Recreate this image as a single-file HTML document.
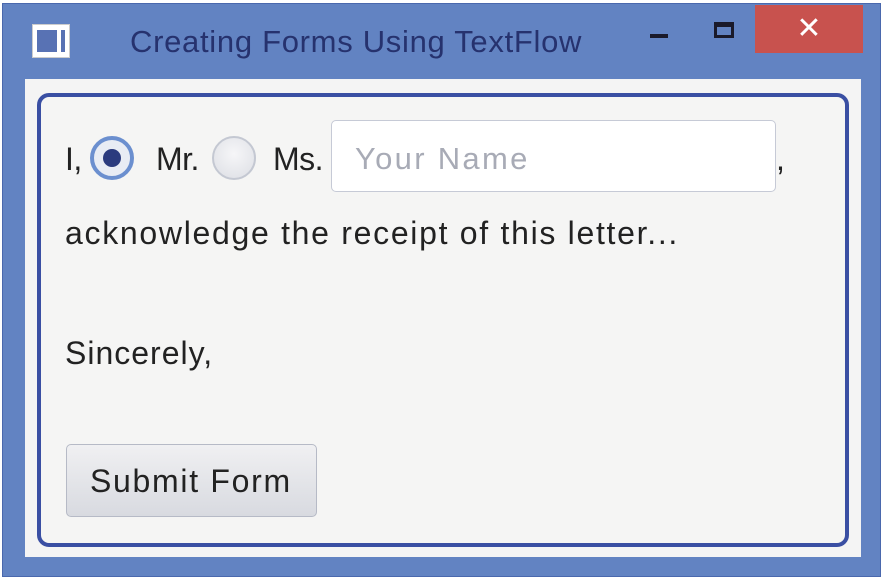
<!DOCTYPE html>
<html><head><style>
body{margin:0;width:885px;height:581px;background:#fff;position:relative;overflow:hidden;font-family:"Liberation Sans",sans-serif}
.win{position:absolute;left:2px;top:3px;width:879px;height:574px;background:#6283c2;border:1px solid #4a68ad;box-sizing:border-box}
.title{position:absolute;left:130px;top:24px;font-size:31px;color:#26326e;letter-spacing:0.7px}
.close{position:absolute;left:755px;top:5px;width:108px;height:48px;background:#c8524e;color:#fff;font-size:30px;text-align:center;line-height:48px}
.content{position:absolute;left:25px;top:79px;width:836px;height:478px;background:#f4f4f4}
.inner{position:absolute;left:37px;top:93px;width:812px;height:454px;border:4px solid #3a4fa3;border-radius:12px;box-sizing:border-box;background:#f5f5f4}
.t{position:absolute;font-size:32px;color:#222;white-space:nowrap;letter-spacing:0.5px}
.radio{position:absolute;width:44px;height:44px;border-radius:50%;box-sizing:border-box}
</style></head><body>
<div class="win"></div>
<div style="position:absolute;left:32px;top:24px;width:38px;height:34px;background:#fff;border:1px solid #ccc;box-sizing:border-box"><div style="position:absolute;left:4px;top:5px;width:20px;height:22px;background:#5872b4"></div><div style="position:absolute;left:28px;top:5px;width:4px;height:22px;background:#5872b4"></div></div>
<div class="title">Creating Forms Using TextFlow</div>
<div style="position:absolute;left:650px;top:34px;width:18px;height:4px;background:#1a1a2a"></div>
<div style="position:absolute;left:714px;top:22px;width:20px;height:16px;border:3px solid #1a1a2a;border-top-width:5px;box-sizing:border-box"></div>
<div class="close">✕</div>
<div class="content"></div>
<div class="inner"></div>
<div class="t" style="left:65px;top:141px;letter-spacing:-0.5px">I,</div>
<div class="radio" style="left:90px;top:136px;border:4px solid #6b8fcf;background:#e8ecf4"><div style="position:absolute;left:9px;top:9px;width:18px;height:18px;border-radius:50%;background:#2b3b7e"></div></div>
<div class="t" style="left:156px;top:141px;letter-spacing:-0.5px">Mr.</div>
<div class="radio" style="left:212px;top:136px;border:2px solid #c4c8d2;background:radial-gradient(circle at 50% 40%,#f6f6f8,#dcdee4)"></div>
<div class="t" style="left:273px;top:141px;letter-spacing:-0.5px">Ms.</div>
<div style="position:absolute;left:331px;top:120px;width:445px;height:72px;background:#fff;border:1px solid #c6cad6;border-radius:5px;box-sizing:border-box"></div>
<div class="t" style="left:355px;top:141px;color:#a8abb6;font-size:31px;letter-spacing:2.3px">Your Name</div>
<div class="t" style="left:776px;top:141px">,</div>
<div class="t" style="left:65px;top:215px;letter-spacing:1.7px">acknowledge the receipt of this letter...</div>
<div class="t" style="left:65px;top:335px;letter-spacing:1px">Sincerely,</div>
<div style="position:absolute;left:66px;top:444px;width:251px;height:73px;border:1px solid #b6bac6;border-radius:5px;box-sizing:border-box;background:linear-gradient(#f0f0f2,#d8dae0)"></div>
<div class="t" style="left:90px;top:463px;letter-spacing:1.7px">Submit Form</div>
</body></html>
